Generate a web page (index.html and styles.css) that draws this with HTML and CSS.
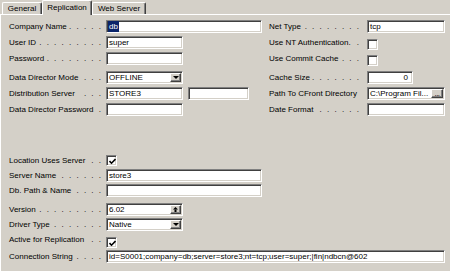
FILE: index.html
```html
<!DOCTYPE html>
<html lang="en">

<head>
    <meta charset="UTF-8">
    <title>Replication</title>
    <link rel="stylesheet" href="styles.css">
</head>

<body>
    <div class="tabs">
        <div class="tab tab-general">General</div>
        <div class="tab tab-repl active">Replication</div>
        <div class="tab tab-web">Web Server</div>
    </div>

    <div class="panel">
        <div class="top">
            <div class="col left">
                <div class="row">
                    <div class="lbl"><span>Company Name</span><span class="dots">. . . . .</span></div>
                    <div class="edit w-long"><span class="sel">db</span></div>
                </div>
                <div class="row">
                    <div class="lbl"><span>User ID</span><span class="dots">. . . . . . . . .</span></div>
                    <div class="edit w-short">super</div>
                </div>
                <div class="row">
                    <div class="lbl"><span>Password</span><span class="dots">. . . . . . . .</span></div>
                    <div class="edit w-short"></div>
                </div>
                <div class="row gap">
                    <div class="lbl"><span>Data Director Mode</span><span class="dots">. . .</span></div>
                    <div class="edit combo w-short">
                        <span>OFFLINE</span>
                        <span class="btn"><i class="arrow-down"></i></span>
                    </div>
                </div>
                <div class="row">
                    <div class="lbl"><span>Distribution Server</span><span class="dots">. . .</span></div>
                    <div class="edit w-short">STORE3</div>
                    <div class="edit w-extra"></div>
                </div>
                <div class="row">
                    <div class="lbl"><span>Data Director Password</span><span class="dots">.</span></div>
                    <div class="edit w-short"></div>
                </div>
            </div>

            <div class="col right">
                <div class="row">
                    <div class="lbl"><span>Net Type</span><span class="dots">. . . . . . . .</span></div>
                    <div class="edit w-right">tcp</div>
                </div>
                <div class="row">
                    <div class="lbl"><span>Use NT Authentication.</span><span class="dots">.</span></div>
                    <div class="cb cb-top"></div>
                </div>
                <div class="row">
                    <div class="lbl"><span>Use Commit Cache</span><span class="dots">. . .</span></div>
                    <div class="cb cb-top"></div>
                </div>
                <div class="row gap">
                    <div class="lbl"><span>Cache Size</span><span class="dots">. . . . . . .</span></div>
                    <div class="edit w-num">0</div>
                </div>
                <div class="row">
                    <div class="lbl"><span>Path To CFront Directory</span></div>
                    <div class="edit combo w-right">
                        <span>C:\Program Fil...</span>
                        <span class="btn btn-dots">...</span>
                    </div>
                </div>
                <div class="row">
                    <div class="lbl"><span>Date Format</span><span class="dots">. . . . . .</span></div>
                    <div class="edit w-right"></div>
                </div>
            </div>
        </div>

        <div class="bottom">
            <div class="row">
                <div class="lbl"><span>Location Uses Server</span><span class="dots">. .</span></div>
                <div class="cb cb-loc">
                    <svg width="7" height="7" viewBox="0 0 7 7"><polyline points="0.5,3 2.5,5.2 6.5,1" fill="none" stroke="#000" stroke-width="1.6"/></svg>
                </div>
            </div>
            <div class="row">
                <div class="lbl"><span>Server Name</span><span class="dots">. . . . . .</span></div>
                <div class="edit w-long">store3</div>
            </div>
            <div class="row">
                <div class="lbl"><span>Db. Path &amp; Name</span><span class="dots">. . . .</span></div>
                <div class="edit w-long"></div>
            </div>
            <div class="row gap-ver">
                <div class="lbl"><span>Version</span><span class="dots">. . . . . . . . .</span></div>
                <div class="edit combo w-short">
                    <span>6.02</span>
                    <span class="btn">
                        <svg width="5" height="5" viewBox="0 0 5 5"><polygon points="2.5,0 5,2.5 0,2.5" fill="#000"/><rect x="1.5" y="2.5" width="2" height="2.5" fill="#000"/></svg>
                    </span>
                </div>
            </div>
            <div class="row">
                <div class="lbl"><span>Driver Type</span><span class="dots">. . . . . . .</span></div>
                <div class="edit combo w-short">
                    <span>Native</span>
                    <span class="btn"><i class="arrow-down"></i></span>
                </div>
            </div>
            <div class="row">
                <div class="lbl"><span>Active for Replication</span><span class="dots">. .</span></div>
                <div class="cb cb-act">
                    <svg width="7" height="7" viewBox="0 0 7 7"><polyline points="0.5,3 2.5,5.2 6.5,1" fill="none" stroke="#000" stroke-width="1.6"/></svg>
                </div>
            </div>
            <div class="row gap-conn">
                <div class="lbl"><span>Connection String</span><span class="dots">. . . .</span></div>
                <div class="edit w-conn">id=S0001;company=db;server=store3;nt=tcp;user=super;|fin|ndbcn@602</div>
            </div>
        </div>
    </div>
</body>

</html>
```

FILE: styles.css
```css
* {
    margin: 0;
    padding: 0;
    box-sizing: border-box;
}

body {
    width: 450px;
    height: 271px;
    overflow: hidden;
    background-color: #d4d0c8;
    font-family: "Liberation Sans", Arial, sans-serif;
    font-size: 8px;
    color: #000;
}

/* tab strip */
.tabs {
    display: flex;
    align-items: flex-end;
    height: 15px;
    padding-left: 2px;
    border-bottom: 1px solid #fff;
}

.tab {
    height: 12px;
    line-height: 11px;
    text-align: center;
    border: 1px solid #fff;
    border-bottom: none;
    border-right-color: #404040;
    border-radius: 2px 2px 0 0;
    box-shadow: inset -1px 0 #808080;
}

.tab-general {
    width: 40px;
}

.tab-repl {
    width: 50px;
}

.tab-web {
    width: 54px;
}

.tab.active {
    position: relative;
    height: 15px;
    line-height: 13px;
    margin-bottom: -1px;
    background-color: #d4d0c8;
}

.panel {
    border-left: 1px solid #fff;
    padding: 5px 0 0 8px;
    height: 256px;
}

.top {
    display: flex;
}

.left {
    width: 260px;
}

.right {
    width: 176px;
}

.row {
    display: flex;
    align-items: flex-start;
    height: 16px;
}

.row.gap {
    margin-top: 3px;
}

.lbl {
    display: flex;
    width: 97px;
    flex-shrink: 0;
    line-height: 13px;
    white-space: nowrap;
}

.right .lbl {
    width: 98px;
}

.dots {
    margin-left: auto;
    word-spacing: 3px;
    padding-right: 5px;
}

.right .dots {
    padding-right: 8px;
}

/* sunken edit boxes */
.edit {
    display: flex;
    align-items: center;
    height: 13px;
    padding: 0 1px 0 2px;
    background-color: #fff;
    border: 1px solid;
    border-color: #808080 #fff #fff #808080;
    box-shadow: inset 1px 1px #404040, inset -1px -1px #d4d0c8;
    line-height: 11px;
    white-space: nowrap;
    overflow: hidden;
}

.w-long {
    width: 156px;
}

.w-short {
    width: 77px;
}

.w-extra {
    width: 61px;
    margin-left: 5px;
}

.w-right {
    width: 78px;
}

.w-num {
    width: 46px;
    justify-content: flex-end;
    padding-right: 4px;
}

.w-conn {
    width: 339px;
}

.sel {
    background-color: #0a246a;
    color: #fff;
    padding: 0 1px;
    margin-left: -1px;
}

.combo {
    padding: 1px 1px 1px 2px;
}

.btn {
    display: flex;
    align-items: center;
    justify-content: center;
    width: 11px;
    height: 9px;
    margin-left: auto;
    background-color: #d4d0c8;
    border: 1px solid;
    border-color: #fff #404040 #404040 #fff;
    box-shadow: inset -1px -1px #808080;
}

.btn-dots {
    width: 12px;
    align-items: flex-end;
    line-height: 6px;
    font-size: 8px;
    letter-spacing: -0.5px;
}

.arrow-down {
    width: 0;
    height: 0;
    border-left: 3px solid transparent;
    border-right: 3px solid transparent;
    border-top: 3px solid #000;
}

/* check boxes */
.cb {
    display: flex;
    align-items: center;
    justify-content: center;
    width: 11px;
    height: 11px;
    background-color: #fff;
    border: 1px solid;
    border-color: #808080 #fff #fff #808080;
    box-shadow: inset 1px 1px #404040, inset -1px -1px #d4d0c8;
}

.cb-top {
    margin-top: 3px;
}

.cb svg {
    margin: 1px 0 0 1px;
}

.bottom {
    margin-top: 35px;
}

.bottom .row {
    height: 15px;
}

.cb-loc {
    margin-top: 1px;
}

.cb-act {
    margin-top: 4px;
}

.bottom .row.gap-ver {
    margin-top: 4px;
}

.bottom .row.gap-conn {
    margin-top: 2px;
}
```
